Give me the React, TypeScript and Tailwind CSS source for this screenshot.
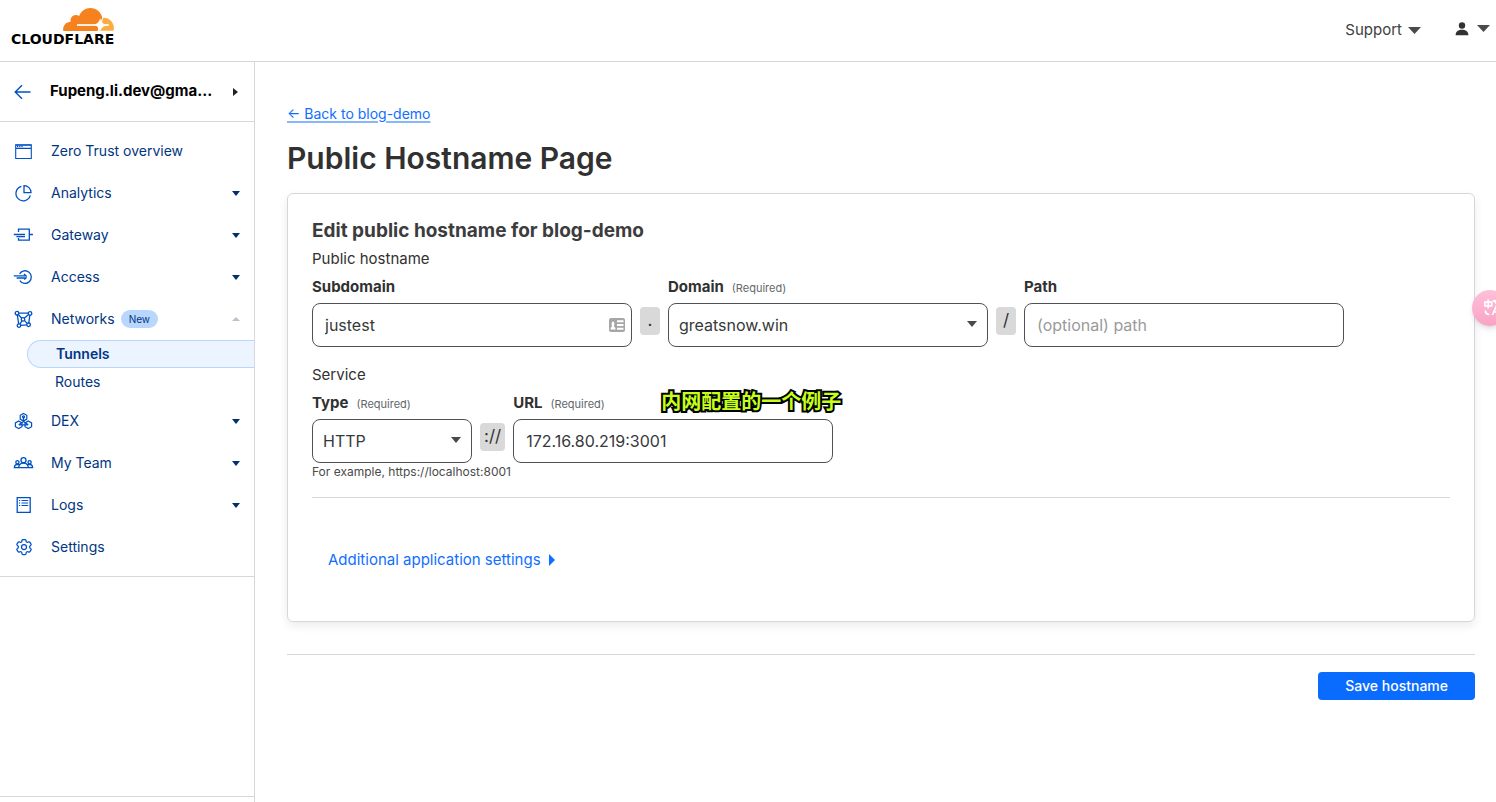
import type { ReactNode } from "react";
import { HiOutlineCog6Tooth } from "react-icons/hi2";

const LINE = "border-[#d5d7d8]";

function CloudflareLogo() {
  return (
    <a href="#home" aria-label="Cloudflare" className="flex flex-col items-end pb-1.5 text-black">
      <svg viewBox="0 0 256 116" className="h-[23px] w-[51px]" aria-hidden="true">
        <path
          fill="#f6821f"
          d="M176.332 108.348c1.593-5.31 1.062-10.622-1.593-13.809-2.656-3.187-6.374-5.31-11.154-5.842L71.17 87.634c-.531 0-1.062-.53-1.593-.53-.531-.532-.531-1.063 0-1.594.531-1.062 1.062-1.594 2.124-1.594l92.946-1.062c11.154-.53 22.839-9.56 27.087-20.182l5.312-13.809c0-.532.531-1.063 0-1.594C191.203 20.182 166.772 0 138.091 0 111.535 0 88.697 16.995 80.73 40.896c-5.311-3.718-11.684-5.843-19.12-5.31-12.747 1.061-22.838 11.683-24.432 24.43-.531 3.187 0 6.374.532 9.56C16.996 70.107 0 87.103 0 108.348c0 2.124 0 3.718.531 5.842 0 1.063 1.062 1.594 1.594 1.594h170.489c1.062 0 2.125-.53 2.125-1.594l1.593-5.842Z"
        />
        <path
          fill="#fbad41"
          d="M205.544 48.863h-2.656c-.531 0-1.062.53-1.593 1.062l-3.718 12.747c-1.593 5.31-1.062 10.623 1.594 13.809 2.655 3.187 6.373 5.31 11.153 5.843l19.652 1.062c.53 0 1.062.53 1.593.53.53.532.53 1.063 0 1.594-.531 1.063-1.062 1.594-2.125 1.594l-20.182 1.062c-11.154.53-22.838 9.56-27.087 20.182l-1.063 4.78c-.531.532 0 1.594 1.063 1.594h70.108c1.062 0 1.593-.531 1.593-1.593 1.062-4.25 2.124-9.03 2.124-13.81 0-27.618-22.838-50.456-50.456-50.456"
        />
        <path
          fill="#fff"
          d="M70 82h84c14 0 24-6 29-20l4-9 5 12c4 10 10 15 20 17l18 2v5l-18 2c-10 2-17 8-21 17l-5 10-5-11c-4-10-10-16-19-17l-8-1H70z"
        />
      </svg>
      <span className="font-['DejaVu_Sans',sans-serif] text-[14px] leading-4 font-bold">
        CLOUDFLARE
      </span>
    </a>
  );
}

type CaretProps = { direction?: "down" | "up"; className: string };

function Caret({ direction = "down", className }: CaretProps) {
  const d = { down: "M0 0h10L5 6z", up: "M0 6h10L5 0z" }[direction];
  return (
    <svg viewBox="0 0 10 6" preserveAspectRatio="none" className={className} aria-hidden="true">
      <path d={d} fill="currentColor" />
    </svg>
  );
}

function RightCaret({ className }: { className: string }) {
  return (
    <svg viewBox="0 0 6 10" preserveAspectRatio="none" className={className} aria-hidden="true">
      <path d="M0 0v10l6-5z" fill="currentColor" />
    </svg>
  );
}

function NavIcon({ children }: { children: ReactNode }) {
  return (
    <svg
      viewBox="0 0 20 20"
      className="size-5 shrink-0 overflow-visible text-[#0051c3]"
      fill="none"
      stroke="currentColor"
      strokeWidth="1.3"
      aria-hidden="true"
    >
      {children}
    </svg>
  );
}

const overviewIcon = (
  <NavIcon>
    <path strokeWidth="1.1" d="M1.7 3.700h15.600v13.800H1.700zM1.700 7.400h15.600" />
    <path d="M3 5.500h6.400" strokeDasharray="1.200 1" />
    <path strokeWidth="1.100" d="M1.700 4.200h15.600" />
  </NavIcon>
);
const analyticsIcon = (
  <NavIcon>
    <path d="M10 2.600a6.900 6.900 0 0 1 7 7h-7z" />
    <path d="M7.400 3.400a7.300 7.300 0 1 0 8.900 9" />
  </NavIcon>
);
const gatewayIcon = (
  <NavIcon>
    <path d="M4.500 7V4.200h10.800v11H4.500V13M15.300 9.500h3.600M-.2 9.500H11M2.400 11.600H11" />
  </NavIcon>
);
const accessIcon = (
  <NavIcon>
    <path d="M5.600 6.800a6.300 6.300 0 1 1 .2 6.800M-.2 8.800h12M2.600 11h9.200M10 6.900l2.700 2.500" />
    <path d="M12.600 10.400l-2.400 2.200" />
  </NavIcon>
);
const networksIcon = (
  <NavIcon>
    <circle cx="3" cy="4.200" r="1.800" />
    <circle cx="16" cy="4.400" r="1.800" />
    <circle cx="5" cy="16.600" r="1.800" />
    <circle cx="14.600" cy="15.800" r="1.800" />
    <circle cx="9" cy="10.400" r="1.700" />
    <path d="M4.800 4.200h9.400M3.300 6l1.400 8.800M15.800 6.200L14.800 14M6.800 16.400l6-.5M4.300 5.500l3.400 3.700M14.600 5.600l-4.300 3.700M7.900 11.800l-1.900 3.300M10.400 11.400l2.900 3.200" />
  </NavIcon>
);
const dexIcon = (
  <NavIcon>
    <path
      strokeWidth="1.200"
      d="M9.500 2.400l3.300 1.900v3.800L9.500 10 6.200 8.100V4.300zM4.700 10l3.300 1.900v3.800l-3.300 1.900-3.300-1.900v-3.800zM14.300 10l3.300 1.900v3.800l-3.300 1.900-3.300-1.900v-3.800z"
    />
    <path strokeWidth="1.200" d="M9.500 6v4.500M9.500 10.500l-4.800 3.300M9.500 10.500l4.800 3.300M5 13.800h9" />
    <circle cx="9.500" cy="5.800" r="1" />
  </NavIcon>
);
const teamIcon = (
  <NavIcon>
    <circle cx="9.500" cy="7.200" r="2.500" />
    <circle cx="3.400" cy="9.300" r="1.600" />
    <circle cx="15.600" cy="9.300" r="1.600" />
    <path d="M4.600 14.600c.3-2.900 2-4.400 4.900-4.400s4.600 1.500 4.900 4.400M.4 14.600c0-2 1-3.100 3-3.200 1 0 1.700.3 2.200.8M18.600 14.600c0-2-1-3.100-3-3.200-1 0-1.700.3-2.200.8M-.3 14.600h19.600" />
  </NavIcon>
);
const logsIcon = (
  <NavIcon>
    <path d="M3.200 2.700h13v14.700h-13z" />
    <path strokeWidth="1.100" d="M5 5.500h1.200M7.500 5.500h6.700M5 8h1.200M7.500 8h6.700M5 10.500h1.200M7.500 10.500h6.700" />
  </NavIcon>
);
const settingsIcon = (
  <HiOutlineCog6Tooth className="size-5 shrink-0 text-[#0051c3]" aria-hidden="true" />
);

type NavItemProps = {
  icon: ReactNode;
  label: string;
  caret?: "down" | "up";
  badge?: string;
};

function NavItem({ icon, label, caret, badge }: NavItemProps) {
  return (
    <a
      href={"#" + label.toLowerCase().replace(/ /g, "-")}
      className="flex h-[42px] items-center gap-[17px] px-3.5 text-sm text-[#003682]"
    >
      {icon}
      <span className="flex flex-1 items-center gap-1.5">
        {label}
        {badge && (
          <span className="rounded-full bg-[#b9d6ff] px-2 text-[10px] leading-[18px]">{badge}</span>
        )}
      </span>
      {caret && (
        <Caret
          direction={caret}
          className={caret === "up" ? "h-1 w-2 text-[#b8c2d4]" : "h-[5px] w-2 text-[#003070]"}
        />
      )}
    </a>
  );
}

function Sidebar() {
  return (
    <aside className={"flex w-[255px] shrink-0 flex-col border-r " + LINE}>
      <div className={"flex h-[60px] items-center border-b pr-4 pl-3.5 " + LINE}>
        <a href="#back" aria-label="Back">
          <svg
            viewBox="0 0 17 16"
            className="h-4 w-[17px]"
            fill="none"
            stroke="#0051c3"
            strokeWidth="1.400"
            aria-hidden="true"
          >
            <path d="M16.500 8H1M8 1.200L1.200 8 8 14.800" />
          </svg>
        </a>
        <button
          type="button"
          className="ml-[19px] flex flex-1 items-center justify-between text-[15px] font-bold text-black"
        >
          Fupeng.li.dev@gma...
          <RightCaret className="h-2 w-[5px] text-[#222]" />
        </button>
      </div>
      <nav aria-label="Zero Trust" className={"border-b py-2 " + LINE}>
        <NavItem icon={overviewIcon} label="Zero Trust overview" />
        <NavItem icon={analyticsIcon} label="Analytics" caret="down" />
        <NavItem icon={gatewayIcon} label="Gateway" caret="down" />
        <NavItem icon={accessIcon} label="Access" caret="down" />
        <NavItem icon={networksIcon} label="Networks" caret="up" badge="New" />
        <div className="mb-1 pl-[27px] text-sm text-[#003682]">
          <a
            href="#tunnels"
            aria-current="page"
            className="flex h-7 items-center rounded-l-full border border-r-0 border-[#b9d6ff] bg-[#ecf4ff] pl-7 font-semibold"
          >
            Tunnels
          </a>
          <a href="#routes" className="flex h-7 items-center pl-7">
            Routes
          </a>
        </div>
        <NavItem icon={dexIcon} label="DEX" caret="down" />
        <NavItem icon={teamIcon} label="My Team" caret="down" />
        <NavItem icon={logsIcon} label="Logs" caret="down" />
        <NavItem icon={settingsIcon} label="Settings" />
      </nav>
      <div className={"mt-auto h-1.5 border-t " + LINE} />
    </aside>
  );
}

function Label({ htmlFor, text, required }: { htmlFor: string; text: string; required?: boolean }) {
  return (
    <label htmlFor={htmlFor} className="flex h-[30px] items-center gap-2 pb-0.5 text-[15px] font-bold">
      {text}
      {required && (
        <span className="pt-0.5 text-[11px] font-normal text-[#62676a]">(Required)</span>
      )}
    </label>
  );
}

const BOX = "h-11 w-full rounded-lg border border-[#4e5255] bg-white text-base text-[#36393a]";

function SelectBox({ id, value }: { id: string; value: string }) {
  return (
    <div className="relative">
      <select id={id} defaultValue={value} className={"appearance-none px-2.5 " + BOX}>
        <option>{value}</option>
      </select>
      <Caret className="pointer-events-none absolute top-[18px] right-[11px] h-1.5 w-2.5 text-[#4a4a4a]" />
    </div>
  );
}

function Separator({ children }: { children: ReactNode }) {
  return (
    <span className="mx-2 mt-[34px] flex h-7 min-w-5 items-center justify-center rounded-sm bg-[#d9d9d9] px-1 text-[17px]">
      {children}
    </span>
  );
}

function ContactCardIcon() {
  return (
    <svg
      viewBox="0 0 16 14"
      className="pointer-events-none absolute top-[15px] right-[7px] h-3.5 w-4"
      aria-hidden="true"
    >
      <rect width="16" height="14" rx="2" fill="#a6a6a6" />
      <path
        fill="#fff"
        d="M1.500 11.500c0-2 .6-2.600 1.800-3-1-1.300-1-5 .7-5s1.700 3.700.7 5c1.200.4 1.800 1 1.800 3zM8 2.200h6.500v2H8zM8 6h6.500v2H8zM8 9.800h6.500v2H8z"
      />
    </svg>
  );
}

function HostnameCard() {
  return (
    <section
      className={
        "mt-[15px] rounded-md border px-6 pt-[23px] pb-[47px] shadow-[0_4px_10px_rgba(0,0,0,0.08)] " +
        LINE
      }
    >
      <h2 className="text-[19px] leading-7 font-bold text-[#3c3c3c]">
        Edit public hostname for blog-demo
      </h2>
      <p className="text-[15px] leading-7">Public hostname</p>
      <div className="flex items-start">
        <div className="w-80">
          <Label htmlFor="subdomain" text="Subdomain" />
          <div className="relative">
            <input id="subdomain" type="text" defaultValue="justest" className={"px-3 " + BOX} />
            <ContactCardIcon />
          </div>
        </div>
        <Separator>.</Separator>
        <div className="w-80">
          <Label htmlFor="domain" text="Domain" required />
          <SelectBox id="domain" value="greatsnow.win" />
        </div>
        <Separator>/</Separator>
        <div className="w-80">
          <Label htmlFor="path" text="Path" />
          <input
            id="path"
            type="text"
            placeholder="(optional) path"
            className={"px-3 placeholder:text-[#9a9a9a] " + BOX}
          />
        </div>
      </div>
      <p className="mt-3.5 text-[15px] leading-7">Service</p>
      <div className="flex items-start">
        <div className="w-40">
          <Label htmlFor="type" text="Type" required />
          <SelectBox id="type" value="HTTP" />
        </div>
        <Separator>://</Separator>
        <div className="relative w-80">
          <Label htmlFor="url" text="URL" required />
          <input id="url" type="text" defaultValue="172.16.80.219:3001" className={"px-3 " + BOX} />
          <span
            lang="zh-CN"
            className="absolute -top-1 left-[148px] font-['Noto_Sans_CJK_SC',sans-serif] text-xl leading-8 font-bold whitespace-nowrap text-[#c6ff1a] [-webkit-text-stroke:4px_#000] [paint-order:stroke_fill]"
          >
            内网配置的一个例子
          </span>
        </div>
      </div>
      <p className="text-xs leading-[18px] text-[#4a4a4a]">For example, https://localhost:8001</p>
      <hr className={"mt-4 " + LINE} />
      <button
        type="button"
        className="mt-12 ml-4 flex items-center gap-2 text-[15px] leading-7 text-[#0f6fff]"
      >
        Additional application settings
        <RightCaret className="h-3 w-1.5" />
      </button>
    </section>
  );
}

function TranslateBubble() {
  return (
    <button
      type="button"
      aria-label="Translate"
      className="absolute top-[290px] -right-3 flex size-9 items-center rounded-full bg-linear-to-b from-[#ffc0d9] to-[#f9a3c4] pl-3 shadow-md"
    >
      <svg
        viewBox="0 0 20 18"
        className="h-[18px] w-5"
        fill="none"
        stroke="#fff"
        strokeWidth="1.700"
        aria-hidden="true"
      >
        <path d="M.8 3.200h6.900v3.600H.8zM4.200.6v8.800M1.400 11.600c0 2.800 1.200 3.900 4 3.900M8.800 1.800H17M8.400 16l4.200-9.600L16.800 16M10 13h5.200M11 2.500l2 3" />
      </svg>
    </button>
  );
}

export default function App() {
  return (
    <div className="relative flex min-h-screen flex-col overflow-hidden bg-white font-[Inter,sans-serif] text-[#313131]">
      <header className={"flex h-[62px] items-center justify-between border-b pr-1.5 pl-[11px] " + LINE}>
        <CloudflareLogo />
        <div className="flex items-center gap-[34px]">
          <button type="button" className="flex items-center gap-1.5 text-[15px] text-[#404040]">
            Support
            <Caret className="h-[7px] w-[13px] text-[#4a4a4a]" />
          </button>
          <button type="button" aria-label="Account" className="flex items-center gap-2 pb-1">
            <svg viewBox="0 0 14 14" className="size-3.5" fill="#313131" aria-hidden="true">
              <circle cx="7" cy="3.500" r="3.200" />
              <path d="M.6 13.200C.6 9.600 3.500 7.800 7 7.800s6.400 1.800 6.400 5.400z" />
            </svg>
            <Caret className="h-[7px] w-[13px] text-[#4a4a4a]" />
          </button>
        </div>
      </header>
      <div className="flex flex-1">
        <Sidebar />
        <main className="min-w-0 flex-1 pt-10 pr-[21px] pb-10 pl-8">
          <a
            href="#blog-demo"
            className="block text-sm leading-6 text-[#0f6fff] underline decoration-[#0f6fff]/50 decoration-2 underline-offset-2"
          >
            ← Back to blog-demo
          </a>
          <h1 className="mt-3 text-[30px] leading-10 font-semibold">Public Hostname Page</h1>
          <HostnameCard />
          <hr className={"mt-8 " + LINE} />
          <div className="mt-[17px] flex justify-end">
            <button
              type="button"
              className="h-7 rounded-sm bg-[#0a6cff] px-[27px] text-sm font-medium text-white"
            >
              Save hostname
            </button>
          </div>
        </main>
      </div>
      <TranslateBubble />
    </div>
  );
}
